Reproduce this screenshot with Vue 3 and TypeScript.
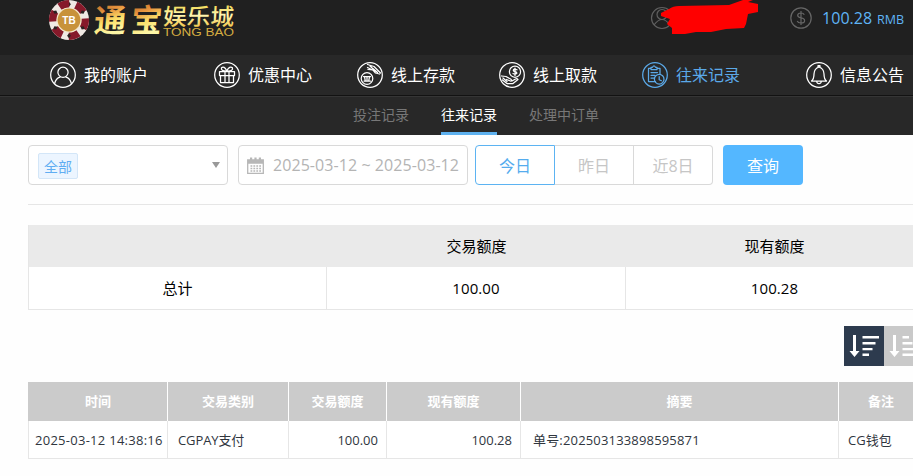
<script setup lang="ts">
import { ref } from 'vue'

interface NavItem {
  label: string
  icon: string
  size: string
}

const navItems: NavItem[] = [
  { label: '我的账户', icon: 'user', size: 'wide' },
  { label: '优惠中心', icon: 'gift', size: 'mid' },
  { label: '线上存款', icon: 'deposit', size: 'slim' },
  { label: '线上取款', icon: 'withdraw', size: 'mid' },
  { label: '往来记录', icon: 'record', size: 'wide' },
  { label: '信息公告', icon: 'bell', size: 'last' },
]
const subItems = ['投注记录', '往来记录', '处理中订单']
const ranges = ['今日', '昨日', '近8日']
const columns = ['时间', '交易类别', '交易额度', '现有额度', '摘要', '备注']
const rows = [
  ['2025-03-12 14:38:16', 'CGPAY支付', '100.00', '100.28', '单号:202503133898595871', 'CG钱包'],
]
const activeNav = ref('往来记录')
const activeSub = ref('往来记录')
const activeRange = ref('今日')
const chipAngles = [0, 60, 120, 180, 240, 300]
</script>

<template>
  <div class="page">
    <header class="top">
      <svg class="logo" width="190" height="54" viewBox="0 0 190 54">
        <defs>
          <linearGradient id="goldA" x1="0" y1="0" x2="0.25" y2="1">
            <stop offset="0.1" stop-color="#a9561c" />
            <stop offset="0.42" stop-color="#e8953f" />
            <stop offset="0.65" stop-color="#fbe06a" />
            <stop offset="0.9" stop-color="#fdf6a6" />
          </linearGradient>
          <linearGradient id="goldB" x1="0" y1="0" x2="0" y2="1">
            <stop offset="0.2" stop-color="#f0d84e" />
            <stop offset="0.5" stop-color="#fff7b4" />
            <stop offset="0.9" stop-color="#efc23f" />
          </linearGradient>
        </defs>
        <g transform="translate(20 20)">
          <circle r="20" fill="#efe9e4" />
          <g v-for="a in chipAngles" :key="a" :transform="`rotate(${a})`">
            <path d="M9 -17.9A20 20 0 0 1 17.7 -9.2L11 -5.6A12.4 12.4 0 0 0 5.5 -11.1Z" fill="#86192a" transform="rotate(-2)" />
            <path d="M0 -18.2l1.9 2.4L0 -13.3l-1.900 -2.500z" fill="#2b2222" />
          </g>
          <circle r="12.6" fill="#f4e8cc" />
          <circle r="11.4" fill="#c8923a" />
          <text class="chip-text" x="0" y="4" text-anchor="middle">TB</text>
        </g>
        <g class="brush" fill="url(#goldA)" transform="skewX(-5)">
          <text x="47" y="32" font-size="32" textLength="32" lengthAdjust="spacingAndGlyphs">通</text>
          <text x="84" y="32" font-size="32" textLength="31" lengthAdjust="spacingAndGlyphs">宝</text>
        </g>
        <text class="brush small" x="115" y="25" font-size="23" fill="url(#goldB)" textLength="71" lengthAdjust="spacingAndGlyphs" transform="skewX(-3)">娱乐城</text>
        <text class="latin" x="114" y="36" fill="#d6ad42" textLength="71" lengthAdjust="spacingAndGlyphs">TONG BAO</text>
      </svg>
      <svg class="user-mark" width="112" height="36" viewBox="0 0 112 36">
        <g fill="none" stroke="#606060" stroke-width="1.2">
          <circle cx="12" cy="18" r="10.5" />
          <circle cx="12" cy="14.5" r="5" />
          <path d="M4 25Q12 14 20 25" />
        </g>
        <path d="M11 13L19 9Q23 6 29 6L79 5L93 0H103L98 2L108 4V12L98 14L96 24L94 28L76 29L61 32L46 32L35 34H22V28L17 24L20 19L11 16Z" fill="#ff0000" />
      </svg>
      <div class="balance">
        <svg width="22" height="22" viewBox="0 0 22 22" fill="none" stroke="#666" stroke-width="1.2">
          <circle cx="11" cy="11" r="10.2" />
          <path d="M14.3 7.8Q13.5 6 11 6Q7.700 6 7.700 8.300Q7.700 10.400 11 10.900Q14.600 11.400 14.600 13.700Q14.600 16 11 16Q8 16 7.200 14M11 4v14" />
        </svg>
        <span class="amount">100.28</span><span class="currency">RMB</span>
      </div>
    </header>

    <nav class="nav">
      <a v-for="item in navItems" :key="item.label" :class="['nav-item', item.size, { active: activeNav === item.label }]" @click="activeNav = item.label">
        <svg width="26" height="26" viewBox="0 0 26 26" fill="none" stroke="currentColor" stroke-width="1.25" stroke-linecap="round" stroke-linejoin="round">
          <circle cx="13" cy="13" r="12.3" />
          <template v-if="item.icon === 'user'">
            <circle cx="13" cy="10.3" r="5.1" />
            <path d="M4.6 21.5Q6 16.2 10 15.2M21.4 21.5Q20 16.2 16 15.2" />
          </template>
          <template v-else-if="item.icon === 'gift'">
            <path d="M5.5 9.5h15v4h-15zM6.5 13.5v7h13v-7M11 9.5v11M15 9.5v11M12.5 9.2Q6.5 9 7.5 5.8Q10 3.5 12.8 8.8Q15.8 3.5 18.4 5.8Q19.5 9 13.5 9.2" />
          </template>
          <template v-else-if="item.icon === 'deposit'">
            <circle cx="10" cy="16.5" r="5.8" />
            <path d="M6.5 14.5h7M7 19h6.5M7.5 14.5l.7 4.2M10 14.5v4.2M12.5 14.5l-.7 4.2M10.5 2.5L17 4.5L23.5 11M11 7.5L16 8L18.5 11L22.5 12M13 4L18.5 9.2M16.5 7l4 3.5M10.5 5.5l5 2.5" />
          </template>
          <template v-else-if="item.icon === 'withdraw'">
            <circle cx="16" cy="9.7" r="5.6" />
            <path d="M18 7.8Q14.5 6.3 14.3 8.3Q14.5 9.5 16 9.7Q18.2 10.2 17.7 11.5Q16 12.7 14 11.5M16 6v7.4M2.5 14L7 14.5L12 17.3Q13.5 19 11.5 19L7.5 17.5M3.5 18L8 21.5H14L19 17.5Q18 16 16.5 17L13 19M4 16l4 3.5" />
          </template>
          <template v-else-if="item.icon === 'record'">
            <path d="M9 6.3H6.5v13.2h7M15 6.3h3v6M9 7.5V5.3h1.5Q12 2.5 13.5 5.3H15v2.2zM9 10.5h6.5M9 13.3h4M9 16h3" />
            <circle cx="17.2" cy="17.2" r="4.8" />
            <path d="M17.2 14.5v3.2l2.2 1" />
          </template>
          <template v-else>
            <path d="M5.5 19Q8 17 8 12Q8.2 6.5 13 5Q17.8 6.5 18 12Q18 17 20.5 19ZM12 5V3.7h2V5M10.7 19.5Q11 21.7 13 21.7Q15 21.7 15.3 19.5" />
          </template>
        </svg>
        <span>{{ item.label }}</span>
      </a>
    </nav>

    <nav class="subnav">
      <a v-for="s in subItems" :key="s" :class="{ active: activeSub === s }" @click="activeSub = s">{{ s }}</a>
    </nav>

    <main class="content">
      <div class="filters">
        <div class="select"><span class="tag">全部</span><i class="caret"></i></div>
        <div class="date">
          <svg width="17" height="17" viewBox="0 0 17 17">
            <path d="M.7 3h15.600v13.300H.7z" fill="none" stroke="#b7b7b7" stroke-width="1.3" />
            <path d="M1 3h15v3.700H1zM3 .5h2.200v3H3zM7.400.5h2.200v3H7.400zM11.800.5H14v3h-2.200z" fill="#b7b7b7" />
            <path d="M3.500 9h10.500M3.500 11.500h10.500M3.500 14h10.500" stroke="#b7b7b7" stroke-width="1.4" stroke-dasharray="1.8 1.1" />
          </svg>
          <span>2025-03-12 ~ 2025-03-12</span>
        </div>
        <div class="ranges">
          <button v-for="r in ranges" :key="r" :class="{ active: activeRange === r }" @click="activeRange = r">{{ r }}</button>
        </div>
        <button class="query">查询</button>
      </div>

      <div class="summary">
        <div class="summary-row head"><span></span><span>交易额度</span><span>现有额度</span></div>
        <div class="summary-row"><span>总计</span><span class="num">100.00</span><span class="num">100.28</span></div>
      </div>

      <div class="sorts">
        <button class="sort on">
          <svg width="40" height="40" viewBox="0 0 40 40" fill="#fff"><path d="M9 9h3v16h3.500L10.500 31L5.500 25H9zM18.500 10H35v2.500H18.500zM18.500 16h13v2.500h-13zM18.500 22h10v2.300h-10zM18.500 27.500h6.500v2.500h-6.500z" /></svg>
        </button>
        <button class="sort">
          <svg width="40" height="40" viewBox="0 0 40 40" fill="#fff"><path d="M9 9h3v16h3.500L10.500 31L5.500 25H9zM18.500 10H25v2.500h-6.500zM18.500 16h10v2.500h-10zM18.500 22h13v2.300h-13zM18.500 27.500H35v2.500H18.500z" /></svg>
        </button>
      </div>

      <div class="records">
        <div class="record-row head"><span v-for="c in columns" :key="c">{{ c }}</span></div>
        <div v-for="row in rows" :key="row[0]" class="record-row">
          <span v-for="(cell, i) in row" :key="i" :class="`cell-${i}`">{{ cell }}</span>
        </div>
      </div>
    </main>
  </div>
</template>

<style>
body {
  overflow: hidden;
  background: #fff;
}
</style>

<style scoped>
* {
  box-sizing: border-box;
}
.page {
  width: 913px;
  height: 476px;
  overflow: hidden;
  font-family: 'Open Sans', 'Noto Sans CJK SC', sans-serif;
  background: #fefefe;
  color: #000;
}
button {
  font-family: inherit;
  border: 0;
  padding: 0;
}
.top {
  display: flex;
  height: 55px;
  padding-left: 49px;
  background: #202020;
}
.logo {
  flex: none;
  overflow: visible;
}
.chip-text {
  font: bold 10px 'Liberation Sans', sans-serif;
  fill: #fff;
}
.brush {
  font-family: 'Noto Sans CJK SC', sans-serif;
  font-weight: 700;
}
.small {
  font-weight: 500;
}
.latin {
  font: 10px 'Liberation Sans', sans-serif;
}
.user-mark {
  flex: none;
  margin-left: 411px;
}
.balance {
  display: flex;
  align-items: center;
  height: 36px;
  margin-left: 28px;
  color: #5fb4f5;
}
.balance svg {
  flex: none;
}
.amount {
  width: 55px;
  margin-left: 10px;
  font-size: 16px;
  letter-spacing: 0.05px;
}
.currency {
  padding-top: 3px;
  font-size: 12.5px;
}
.nav {
  display: flex;
  height: 41px;
  padding-left: 50px;
  background: #282828;
  border-bottom: 1px solid #121212;
}
.nav-item {
  display: flex;
  flex: none;
  align-items: center;
  gap: 8px;
  height: 40px;
  color: #fff;
  font-size: 16px;
  white-space: nowrap;
}
.nav-item svg {
  flex: none;
}
.nav-item span {
  padding-bottom: 2px;
}
.wide {
  width: 164px;
}
.mid {
  width: 143px;
}
.slim {
  width: 142px;
}
.last {
  width: 100px;
}
.nav-item.active {
  color: #5ba9e8;
}
.subnav {
  display: flex;
  gap: 32px;
  height: 39px;
  padding-left: 353px;
  border-top: 1px solid #353535;
  background: #282828;
}
.subnav a {
  height: 38px;
  color: #777;
  font-size: 14px;
  line-height: 35px;
}
.subnav a.active {
  border-bottom: 3px solid #5eb1ef;
  color: #fff;
}
.content {
  width: 896px;
  margin-left: 28px;
  padding-top: 10px;
}
.filters {
  display: flex;
  height: 60px;
  border-bottom: 1px solid #e6e6e6;
}
.select,
.date {
  display: flex;
  align-items: center;
  height: 40px;
  border: 1px solid #d9d9d9;
  border-radius: 4px;
  background: #fff;
}
.select {
  width: 200px;
  justify-content: space-between;
  padding: 2px 7px 0 9px;
}
.tag {
  width: 40px;
  height: 26px;
  border: 1px solid #d3e6f8;
  border-radius: 2px;
  background: #ecf5ff;
  color: #60adf2;
  font-size: 14px;
  line-height: 26px;
  text-align: center;
}
.caret {
  border: 4px solid transparent;
  border-top: 6px solid #999;
  border-bottom: 0;
  margin-bottom: 2px;
}
.date {
  width: 230px;
  margin-left: 10px;
  padding: 0 0 0 8px;
  gap: 9px;
  color: #b4b4b4;
  font-size: 16px;
  letter-spacing: 0.07px;
  white-space: nowrap;
}
.date svg {
  flex: none;
}
.ranges {
  display: flex;
  width: 238px;
  margin-left: 7px;
}
.ranges button {
  width: 79px;
  height: 40px;
  border: 1px solid #d9d9d9;
  border-left: 0;
  background: #fff;
  color: #c6c6c6;
  font-size: 16px;
}
.ranges button:first-child {
  width: 80px;
  border-left: 1px solid #d9d9d9;
  border-radius: 4px 0 0 4px;
}
.ranges button:last-child {
  border-radius: 0 4px 4px 0;
}
.ranges button.active {
  border-color: #5cb3f2;
  color: #55acee;
}
.query {
  width: 80px;
  height: 40px;
  margin-left: 10px;
  border-radius: 4px;
  background: #54b7ff;
  color: #fff;
  font-size: 16px;
}
.summary {
  margin-top: 20px;
  border: 1px solid #e6e6e6;
  border-top: 0;
  background: #fff;
}
.summary-row {
  display: grid;
  grid-template-columns: 298px 299px 1fr;
  height: 42px;
  font-size: 15px;
  line-height: 42px;
  text-align: center;
}
.summary-row.head {
  background: #eaeaea;
}
.summary-row:not(.head) span:not(:last-child) {
  border-right: 1px solid #e6e6e6;
}
.num {
  letter-spacing: 0.1px;
}
.sorts {
  display: flex;
  margin: 16px 0 16px 816px;
}
.sort {
  width: 40px;
  height: 40px;
  background: #c9c9c9;
}
.sort.on {
  background: #2d3b4e;
}
.sort svg {
  display: block;
}
.records {
  border-bottom: 1px solid #e6e6e6;
  border-left: 1px solid #e6e6e6;
}
.record-row {
  display: grid;
  grid-template-columns: 139px 121px 98px 134px 318px 1fr;
  height: 37px;
  color: #30363e;
  font-size: 13px;
  line-height: 38px;
  background: #fff;
  white-space: nowrap;
}
.record-row span {
  border-right: 1px solid #e6e6e6;
}
.record-row.head {
  height: 39px;
  margin-left: -1px;
  padding-left: 1px;
  background: #cbcbcb;
  color: #fff;
  font-weight: 700;
  text-align: center;
  line-height: 39px;
}
.record-row.head span {
  border-color: #fff;
}
.record-row .cell-0 {
  padding-left: 6px;
  letter-spacing: 0.27px;
}
.record-row .cell-1 {
  padding-left: 10px;
  letter-spacing: -0.1px;
}
.record-row .cell-2,
.record-row .cell-3 {
  padding-right: 8px;
  text-align: right;
}
.record-row .cell-4 {
  padding-left: 12px;
  letter-spacing: 0.17px;
}
.record-row .cell-5 {
  padding-left: 9px;
}
</style>
